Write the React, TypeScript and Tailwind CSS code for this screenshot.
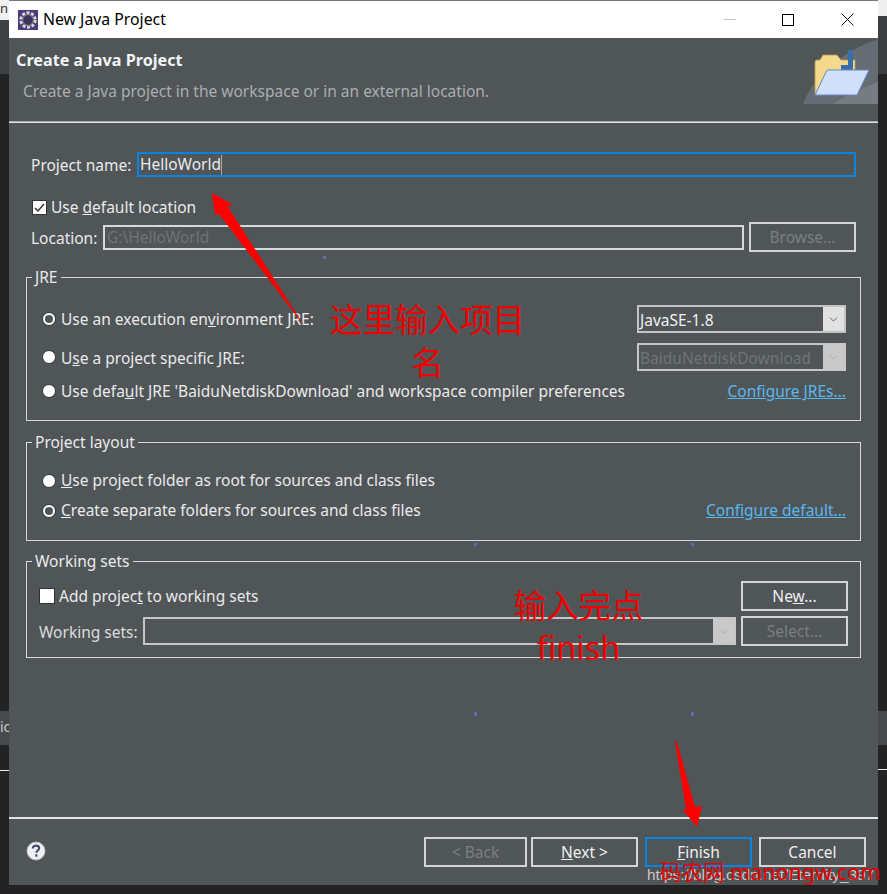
import { ReactNode } from "react";
import { ChevronDown } from "lucide-react";

// ---- small SWT-looking widgets ----
const Btn = ({
  children,
  width = "w-[107px]",
  disabled = false,
  focused = false,
}: {
  children: ReactNode;
  width?: string;
  disabled?: boolean;
  focused?: boolean;
}) => (
  <div
    className={`${width} h-[30px] flex items-center justify-center border-2 text-[15.5px] ${
      focused ? "border-[#0a84e0]" : "border-[#d4d4d4]"
    } ${disabled ? "text-[#7a7f81]" : "text-[#eeeeee]"}`}
  >
    <span className="pt-[2px]">{children}</span>
  </div>
);

const Radio = ({ selected = false }: { selected?: boolean }) => (
  <span className="w-[14px] h-[14px] rounded-full bg-white border border-[#333] flex items-center justify-center shrink-0">
    {selected && <span className="w-[8px] h-[8px] rounded-full bg-[#505558]" />}
  </span>
);

const Combo = ({
  value,
  width,
  disabled = false,
}: {
  value?: string;
  width: string;
  disabled?: boolean;
}) => (
  <div
    className={`${width} h-[28px] flex border-2 ${
      disabled ? "border-[#c6c6c6]" : "border-[#c4c4c4]"
    }`}
  >
    <div
      className={`flex-1 pl-[1px] leading-[26px] text-[15.5px] overflow-hidden whitespace-nowrap ${
        disabled ? "text-[#6f7476]" : "text-[#f0f0f0]"
      }`}
    >
      {value}
    </div>
    <div
      className={`w-[21px] flex items-center justify-center ${
        disabled ? "bg-[#c9c9c9] text-[#a0a0a0]" : "bg-[#e1e1e1] text-[#333]"
      }`}
    >
      <ChevronDown className="w-[13px] h-[13px]" strokeWidth={1.25} />
    </div>
  </div>
);

const Group = ({
  label,
  className,
  children,
}: {
  label: string;
  className: string;
  children: ReactNode;
}) => (
  <div className={`relative w-[835px] border border-[#d8d8d8] ${className}`}>
    <span className="absolute left-[5px] top-[-12px] px-[3px] h-[22px] leading-[22px] bg-[#505558] text-[15.5px] text-[#eaeaea]">
      {label}
    </span>
    {children}
  </div>
);

const Row = ({ className = "", children }: { className?: string; children: ReactNode }) => (
  <div className={`flex items-center ${className}`}>{children}</div>
);

const EclipseLogo = () => (
  <svg width="20" height="20" viewBox="0 0 20 20" className="shrink-0">
    <rect width="20" height="20" fill="#4d3a78" />
    <circle cx="10" cy="10" r="7.2" fill="none" stroke="#d8d8d8" strokeWidth="3" strokeDasharray="3 1.6" />
    <circle cx="10" cy="10" r="5.4" fill="#3c3560" stroke="#8f8f8f" strokeWidth="1" />
  </svg>
);

const WizardFolder = () => (
  <svg width="76" height="67" viewBox="0 0 76 67" className="absolute right-0 top-0">
    <path d="M1 66 C12 36 44 12 76 1 V66 Z" fill="#666c73" />
    <path d="M30 66 C44 58 60 50 76 44 V66 Z" fill="#767c82" />
    <path d="M13 57 V24 Q13 22 15 22 H18 L21 17 H35 L39 22 H53 V36 H30 L19 57 Z" fill="#f3d98b" stroke="#b59a57" strokeWidth="0.8" />
    <path d="M46 12 H51 V32 H39 V27 H46 Z" fill="#3a6ea8" />
    <path d="M25 32 H67 L55 57 H13 Z" fill="#cfe0f8" stroke="#6a86c8" strokeWidth="1" />
  </svg>
);

const HelpIcon = () => (
  <svg width="20" height="20" viewBox="0 0 20 20">
    <circle cx="10" cy="10" r="9" fill="#eef0f4" stroke="#b8bcc6" strokeWidth="1" />
    <path d="M6.8 7.6 C6.8 5.6 8.2 4.6 10 4.6 C11.9 4.6 13.2 5.7 13.2 7.3 C13.2 9.4 10.4 9.5 10.4 11.8" fill="none" stroke="#44506e" strokeWidth="2.1" />
    <rect x="9.2" y="13.3" width="2.3" height="2.3" fill="#44506e" />
  </svg>
);

export default function App() {
  return (
    <div className="relative w-[887px] h-[894px] overflow-hidden bg-[#232323] font-['Noto_Sans','Noto_Sans_CJK_SC',sans-serif]">
      {/* ── bits of the IDE window behind the dialog ── */}
      <div className="absolute left-0 top-0 w-[9px] h-[20px] bg-[#f0f0f0] text-[#333] text-[13px] leading-[16px]">n</div>
      <div className="absolute left-0 top-[20px] w-[9px] h-[54px] bg-[#3e4143]" />
      <div className="absolute left-0 top-[711px] w-[9px] h-[34px] bg-[#47494b] text-[#c8c8c8] text-[14px] leading-[32px]">ic</div>
      <div className="absolute left-0 top-[770px] w-[9px] h-[1px] bg-[#e8e8e8]" />
      <div className="absolute right-0 top-0 w-[9px] h-[16px] bg-[#efefef]" />
      <div className="absolute right-0 top-[16px] w-[9px] h-[58px] bg-[#3c3e40]" />
      <div className="absolute right-0 top-[711px] w-[9px] h-[34px] bg-[#47494b]" />
      <div className="absolute right-0 top-[769px] w-[9px] h-[1px] bg-[#e8e8e8]" />

      {/* ── dialog ── */}
      <div className="relative ml-[9px] w-[869px] h-[885px] bg-[#505558] border-t border-[#777] text-[#eaeaea] text-[15.5px]">
        {/* title bar */}
        <div className="h-[37px] bg-white flex items-center pl-[9px] text-black">
          <EclipseLogo />
          <span className="ml-[5px] text-[15.8px]">New Java Project</span>
          <div className="ml-auto flex items-center">
            <span className="w-[12px] h-[1px] bg-[#c4c4c4] mr-[46px]" />
            <span className="w-[12px] h-[12px] border border-black mr-[47px]" />
            <svg width="13" height="13" viewBox="0 0 13 13" className="mr-[24px]">
              <path d="M0.5 0.5 L12.5 12.5 M12.5 0.5 L0.5 12.5" stroke="#111" strokeWidth="1" />
            </svg>
          </div>
        </div>

        {/* banner */}
        <div className="relative h-[83px] pl-[7px]">
          <WizardFolder />
          <div className="pt-[11px] text-[16.2px] leading-[22px] font-bold text-[#f2f4f6]">Create a Java Project</div>
          <div className="pl-[7px] pt-[9px] leading-[22px] text-[#a9adb0]">
            Create a Java project in the workspace or in an external location.
          </div>
        </div>
        <div className="h-[2px] bg-[#e4e4e4] border-t border-[#aaa]" />

        {/* form */}
        <div className="pl-[17px]">
          <Row className="mt-[29px] h-[25px] pl-[5px]">
            <span className="w-[106px] pt-[2px]">Project name:</span>
            <div className="w-[719px] h-[25px] border-2 border-[#0a84e0] pl-[1px] flex items-center">
              <span className="pt-[1px]">HelloWorld</span>
              <span className="w-[1px] h-[20px] bg-[#aaa]" />
            </div>
          </Row>

          <Row className="mt-[19px] h-[22px] pl-[6px]">
            <span className="w-[15px] h-[15px] bg-white border border-[#333] flex items-center justify-center">
              <svg width="11" height="11" viewBox="0 0 11 11">
                <path d="M1 6 L4 9 L10 2" fill="none" stroke="#333" strokeWidth="1.5" />
              </svg>
            </span>
            <span className="ml-[4px] pt-[2px]">
              Use <u>d</u>efault location
            </span>
          </Row>

          <Row className="mt-[4px] h-[30px] pl-[5px]">
            <span className="w-[72px] pt-[3px]">Location:</span>
            <div className="w-[641px] h-[25px] border-2 border-[#d8d8d8] pl-[2px] leading-[21px] text-[#6f7476]">G:\HelloWorld</div>
            <div className="ml-[5px]">
              <Btn disabled>Browse...</Btn>
            </div>
          </Row>

          <Group label="JRE" className="mt-[25px] h-[144px]">
            <div className="pt-[27px] pl-[15px] pr-[14px]">
              <Row className="h-[28px]">
                <Radio selected />
                <span className="ml-[5px] pt-[2px]">
                  Use an execution en<u>v</u>ironment JRE:
                </span>
                <div className="ml-auto">
                  <Combo value="JavaSE-1.8" width="w-[209px]" />
                </div>
              </Row>
              <Row className="h-[28px] mt-[10px]">
                <Radio />
                <span className="ml-[5px] pt-[3px]">
                  U<u>s</u>e a project specific JRE:
                </span>
                <div className="ml-auto">
                  <Combo value="BaiduNetdiskDownload" width="w-[209px]" disabled />
                </div>
              </Row>
              <Row className="h-[24px] mt-[8px]">
                <Radio />
                <span className="ml-[5px] pt-[2px]">
                  Use defa<u>u</u>lt JRE 'BaiduNetdiskDownload' and workspace compiler preferences
                </span>
                <span className="ml-auto pt-[2px] underline text-[#5ab7ee]">Configure JREs...</span>
              </Row>
            </div>
          </Group>

          <Group label="Project layout" className="mt-[21px] h-[99px]">
            <div className="pt-[26px] pl-[15px] pr-[14px]">
              <Row className="h-[24px]">
                <Radio />
                <span className="ml-[5px]">
                  <u>U</u>se project folder as root for sources and class files
                </span>
              </Row>
              <Row className="h-[24px] mt-[6px]">
                <Radio selected />
                <span className="ml-[5px]">
                  <u>C</u>reate separate folders for sources and class files
                </span>
                <span className="ml-auto underline text-[#5ab7ee]">Configure default...</span>
              </Row>
            </div>
          </Group>

          <Group label="Working sets" className="mt-[20px] h-[97px]">
            <div className="pt-[19px] pl-[12px] pr-[12px]">
              <Row className="h-[30px]">
                <span className="w-[16px] h-[16px] bg-white border border-[#333]" />
                <span className="ml-[4px] pt-[2px]">
                  Add projec<u>t</u> to working sets
                </span>
                <div className="ml-auto">
                  <Btn>
                    Ne<u>w</u>...
                  </Btn>
                </div>
              </Row>
              <Row className="h-[30px] mt-[5px]">
                <span className="w-[104px] pt-[3px] text-[#dcdcdc]">Working sets:</span>
                <Combo width="w-[593px]" disabled />
                <div className="ml-auto">
                  <Btn disabled>Select...</Btn>
                </div>
              </Row>
            </div>
          </Group>
        </div>

        {/* footer */}
        <div className="absolute left-0 right-0 bottom-0 h-[68px] border-t-2 border-[#e4e4e4] flex items-start pt-[18px]">
          <div className="ml-[17px] mt-[4px]">
            <HelpIcon />
          </div>
          <div className="ml-auto mr-[12px] flex">
            <Btn width="w-[103px]" disabled>
              &lt; Back
            </Btn>
            <div className="ml-[4px]">
              <Btn>
                <u>N</u>ext &gt;
              </Btn>
            </div>
            <div className="ml-[7px]">
              <Btn focused>
                <u>F</u>inish
              </Btn>
            </div>
            <div className="ml-[7px]">
              <Btn>Cancel</Btn>
            </div>
          </div>
        </div>
      </div>

      {/* ── stray blue marks of the screenshot ── */}
      <span className="absolute left-[323px] top-[256px] w-[3px] h-[3px] bg-[#5a6eb0]" />
      <span className="absolute left-[474px] top-[543px] w-[3px] h-[3px] bg-[#5a6eb0]" />
      <span className="absolute left-[691px] top-[543px] w-[3px] h-[3px] bg-[#5a6eb0]" />
      <span className="absolute left-[474px] top-[712px] w-[3px] h-[4px] bg-[#5a6eb0]" />
      <span className="absolute left-[691px] top-[712px] w-[3px] h-[4px] bg-[#5a6eb0]" />

      {/* ── red annotations drawn over the dialog ── */}
      <svg width="887" height="894" viewBox="0 0 887 894" className="absolute left-0 top-0 pointer-events-none">
        <polygon points="212,193 232,204 228,207 305,327 219,214 215,215" fill="#ff0000" />
        <polygon points="675,742 677,742 695,807 702,806 697,827 683,810 686,809" fill="#ff0000" />
      </svg>
      <div className="absolute left-[329px] top-[298px] w-[197px] text-center text-[32.5px] leading-[43px] text-[#f00000]">
        这里输入项目
        <br />名
      </div>
      <div className="absolute left-[513px] top-[585px] w-[131px] text-center text-[32.5px] leading-[42px] text-[#f00000]">
        输入完点
        <br />
        finish
      </div>
      <div className="absolute left-[647px] top-[865px] font-['Liberation_Sans',sans-serif] text-[15.3px] leading-[20px] text-[#c8c8c8] whitespace-nowrap">
        https://blog.csdn.net/Eternity_397
      </div>
      <div className="absolute left-[660px] top-[859px] text-[21.5px] leading-[26px] text-[#e60000] whitespace-nowrap">
        码农网 manongw.com
      </div>
    </div>
  );
}
